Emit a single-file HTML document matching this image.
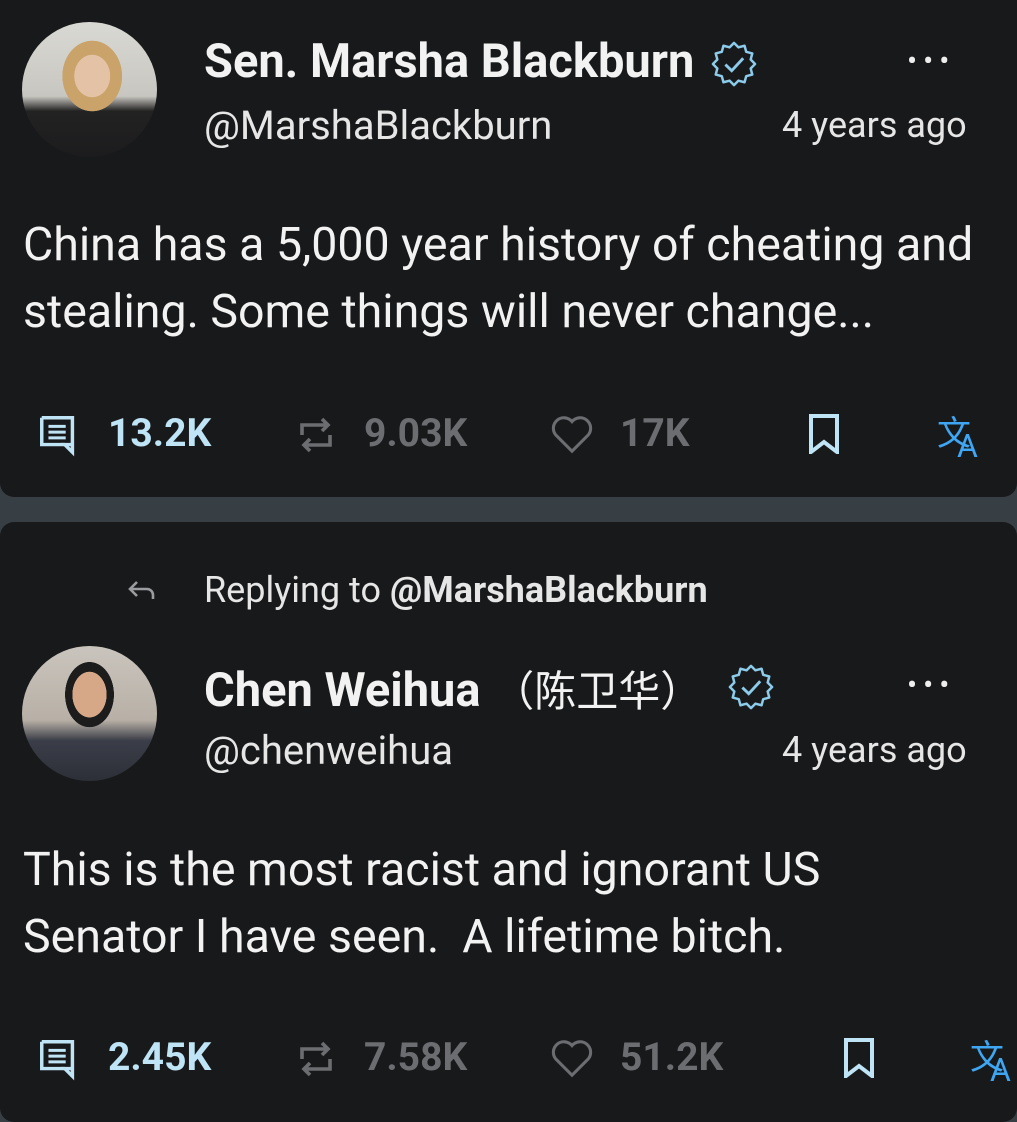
<!DOCTYPE html>
<html><head><meta charset="utf-8"><style>
body{margin:0;width:1017px;height:1099px;background:#383f44;overflow:hidden;font-family:"Roboto","Liberation Sans","Noto Sans CJK SC",sans-serif;color:#eceef0;position:relative}
.card{position:absolute;left:0;width:1017px;background:#18191b;border-radius:14px}
.a{position:absolute;white-space:nowrap}
.name{font-size:47px;font-weight:bold;color:#f2f2f2}
.handle{font-size:40px;color:#e6e6e6}
.time{font-size:36px;color:#e6e6e6}
.body{font-size:46.5px;color:#f2f2f2;line-height:67px}
.cnt{font-size:39px;font-weight:bold}
.dots{font-size:30px;letter-spacing:6px;color:#eee}
svg{position:absolute}
</style></head><body>
<div class="card" style="top:-14px;height:511px"></div>
<div class="card" style="top:522px;height:600px"></div>

<div class="a" style="left:22px;top:22px;width:135px;height:135px;border-radius:50%;background:radial-gradient(ellipse 22% 26% at 52% 40%,#e4c2a6 0 60%,#c9a36a 61% 100%,transparent 101%),linear-gradient(180deg,#d9d9d4 0%,#c8c6c0 55%,#222 66%,#1c1c1e 100%)"></div>
<div class="a name" style="left:204px;top:34px">Sen. Marsha Blackburn</div>
<svg style="left:711px;top:41px" width="46" height="46" viewBox="-12 -12 24 24"><polygon fill="none" stroke="#8ccbea" stroke-width="1.3" stroke-linejoin="round" points="11,0 8.69,2.33 9.53,5.5 6.36,6.36 5.5,9.53 2.33,8.69 0,11 -2.33,8.69 -5.5,9.53 -6.36,6.36 -9.53,5.5 -8.69,2.33 -11,0 -8.69,-2.33 -9.53,-5.5 -6.36,-6.36 -5.5,-9.53 -2.33,-8.69 0,-11 2.33,-8.69 5.5,-9.53 6.36,-6.36 9.53,-5.5 8.69,-2.33"/><path d="M-4.5 0.3 L-1.2 3.5 L4.8 -3" fill="none" stroke="#8ccbea" stroke-width="1.5"/></svg>
<div class="a dots" style="left:907px;top:44px">•••</div>
<div class="a handle" style="left:204px;top:102px">@MarshaBlackburn</div>
<div class="a time" style="left:782px;top:104px">4 years ago</div>
<div class="a body" style="left:23px;top:212px">China has a 5,000 year history of cheating and<br>stealing. Some things will never change...</div>

<svg style="left:36px;top:412px" width="46" height="46" viewBox="0 0 24 24"><path d="M3 3h16v14h-4l4 4v-4" fill="none" stroke="#bfe4f6" stroke-width="1.8"/><path d="M3 3v14h12" fill="none" stroke="#bfe4f6" stroke-width="1.8"/><path d="M6.5 7.5h9M6.5 10.5h9M6.5 13.5h9" stroke="#bfe4f6" stroke-width="1.6"/></svg>
<div class="a cnt" style="left:108px;top:410px;color:#bfe4f6">13.2K</div>
<svg style="left:296px;top:413px" width="40" height="44" viewBox="0 0 20 22"><path d="M3 11V6h13M13 3l3 3-3 3M17 11v5H4M7 19l-3-3 3-3" fill="none" stroke="#6b6d70" stroke-width="1.8"/></svg>
<div class="a cnt" style="left:364px;top:410px;color:#6b6d70">9.03K</div>
<svg style="left:549px;top:413px" width="46" height="42" viewBox="0 0 24 22"><path d="M12 20L3.5 11.5A5 5 0 0 1 12 4.5A5 5 0 0 1 20.5 11.5Z" fill="none" stroke="#6b6d70" stroke-width="1.6"/></svg>
<div class="a cnt" style="left:620px;top:410px;color:#6b6d70">17K</div>
<svg style="left:807px;top:414px" width="34" height="40" viewBox="0 0 17 20"><path d="M2 1h13v18l-6.5-5L2 19Z" fill="none" stroke="#bfe4f6" stroke-width="2"/></svg>
<div class="a" style="left:937px;top:406px;color:#3ea6f2;font-size:34px">文<span style="font-size:32px;margin-left:-14px;vertical-align:-12px">A</span></div>

<svg style="left:127px;top:578px" width="30" height="24" viewBox="0 0 15 12"><path d="M5 2L1.5 5.5L5 9M1.5 5.5H10a3 3 0 0 1 3 3v2" fill="none" stroke="#9a9c9f" stroke-width="1.3"/></svg>
<div class="a" style="left:204px;top:569px;font-size:36px;color:#e6e6e6">Replying to <b>@MarshaBlackburn</b></div>

<div class="a" style="left:22px;top:646px;width:135px;height:135px;border-radius:50%;background:radial-gradient(ellipse 18% 24% at 50% 36%,#d7a887 0 70%,#1c1c1c 71% 100%,transparent 101%),linear-gradient(180deg,#c9c4bd 0%,#b8b0a6 55%,#3b3e48 70%,#2d2f38 100%)"></div>
<div class="a name" style="left:204px;top:658px">Chen Weihua <span style="font-weight:normal;font-size:42px">（陈卫华）</span></div>
<svg style="left:728px;top:664px" width="46" height="46" viewBox="-12 -12 24 24"><polygon fill="none" stroke="#8ccbea" stroke-width="1.3" stroke-linejoin="round" points="11,0 8.69,2.33 9.53,5.5 6.36,6.36 5.5,9.53 2.33,8.69 0,11 -2.33,8.69 -5.5,9.53 -6.36,6.36 -9.53,5.5 -8.69,2.33 -11,0 -8.69,-2.33 -9.53,-5.5 -6.36,-6.36 -5.5,-9.53 -2.33,-8.69 0,-11 2.33,-8.69 5.5,-9.53 6.36,-6.36 9.53,-5.5 8.69,-2.33"/><path d="M-4.5 0.3 L-1.2 3.5 L4.8 -3" fill="none" stroke="#8ccbea" stroke-width="1.5"/></svg>
<div class="a dots" style="left:907px;top:668px">•••</div>
<div class="a handle" style="left:204px;top:727px">@chenweihua</div>
<div class="a time" style="left:782px;top:729px">4 years ago</div>
<div class="a body" style="left:23px;top:837px">This is the most racist and ignorant US<br>Senator I have seen.&nbsp; A lifetime bitch.</div>

<svg style="left:36px;top:1036px" width="46" height="46" viewBox="0 0 24 24"><path d="M3 3h16v14h-4l4 4v-4" fill="none" stroke="#bfe4f6" stroke-width="1.8"/><path d="M3 3v14h12" fill="none" stroke="#bfe4f6" stroke-width="1.8"/><path d="M6.5 7.5h9M6.5 10.5h9M6.5 13.5h9" stroke="#bfe4f6" stroke-width="1.6"/></svg>
<div class="a cnt" style="left:108px;top:1034px;color:#bfe4f6">2.45K</div>
<svg style="left:296px;top:1037px" width="40" height="44" viewBox="0 0 20 22"><path d="M3 11V6h13M13 3l3 3-3 3M17 11v5H4M7 19l-3-3 3-3" fill="none" stroke="#6b6d70" stroke-width="1.8"/></svg>
<div class="a cnt" style="left:364px;top:1034px;color:#6b6d70">7.58K</div>
<svg style="left:549px;top:1037px" width="46" height="42" viewBox="0 0 24 22"><path d="M12 20L3.5 11.5A5 5 0 0 1 12 4.5A5 5 0 0 1 20.5 11.5Z" fill="none" stroke="#6b6d70" stroke-width="1.6"/></svg>
<div class="a cnt" style="left:620px;top:1034px;color:#6b6d70">51.2K</div>
<svg style="left:842px;top:1038px" width="34" height="40" viewBox="0 0 17 20"><path d="M2 1h13v18l-6.5-5L2 19Z" fill="none" stroke="#bfe4f6" stroke-width="2"/></svg>
<div class="a" style="left:970px;top:1030px;color:#3ea6f2;font-size:34px">文<span style="font-size:32px;margin-left:-14px;vertical-align:-12px">A</span></div>
</body></html>
